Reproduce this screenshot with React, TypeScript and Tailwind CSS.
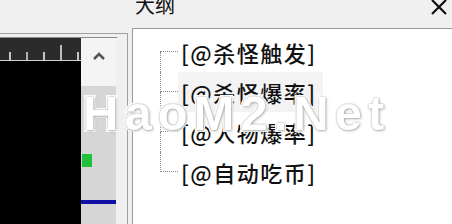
import React from 'react';

const items = ['[@杀怪触发]', '[@杀怪爆率]', '[@人物爆率]', '[@自动吃币]'];

const TreeRow: React.FC<{ label: string; first: boolean; last: boolean; selected: boolean }> = ({
  label,
  first,
  last,
  selected,
}) => (
  <div className="flex h-[40px] items-stretch">
    {/* connector: top half and bottom half of the dotted tree line */}
    <div className="flex w-[18px] flex-col">
      <div
        className={`h-[20px] border-b border-dotted border-[#8a8a8a] ${
          first ? '' : 'border-l'
        }`}
      />
      <div className={`h-[20px] border-dotted border-[#8a8a8a] ${last ? '' : 'border-l'}`} />
    </div>
    <div
      className={`flex items-center pl-[3px] pr-[6px] ${selected ? 'bg-[#f3f3f3]' : ''}`}
    >
      <span className="text-[22px] leading-[40px] font-medium tracking-[1.5px] text-[#111]">
        {label}
      </span>
    </div>
  </div>
);

export default function App() {
  return (
    <div
      className="relative flex h-[224px] w-[452px] overflow-hidden bg-[#f0f0f0]"
      style={{ fontFamily: '"Noto Sans CJK SC", "Noto Sans", sans-serif' }}
    >
      {/* left preview panel */}
      <div className="w-[128px] pt-[33px]">
        <div className="flex h-full flex-col border-t border-r border-[#a0a0a0] pt-[3px] pr-[10px]">
          <div className="flex flex-1 border-t border-[#8a8a8a]">
            {/* black canvas with ruler */}
            <div className="flex w-[81px] flex-col bg-black">
              <div className="flex h-[23px] items-end gap-[15px] border-b border-[#cfcfcf] bg-[#2b2b2b] pl-[9px]">
                <div className="h-[8px] w-[2px] bg-[#c8c8c8]" />
                <div className="h-[8px] w-[2px] bg-[#b0b0b0]" />
                <div className="h-[8px] w-[2px] bg-[#c8c8c8]" />
                <div className="h-[15px] w-[2px] bg-[#bdbdbd]" />
                <div className="h-[8px] w-[2px] bg-[#c8c8c8]" />
              </div>
            </div>
            {/* scrollbar */}
            <div className="flex w-[35px] flex-col bg-[#d6d6d6]">
              <div className="flex h-[48px] items-start justify-center bg-[#f4f4f4] pt-[13px]">
                <svg width="14" height="10" viewBox="0 0 14 10">
                  <path d="M2 8 L7 3 L12 8" fill="none" stroke="#555" strokeWidth="2.6" />
                </svg>
              </div>
              <div className="mt-[68px] ml-[1px] h-[13px] w-[10px] bg-[#1fc23a]" />
              <div className="mt-[33px] h-[4px] w-full bg-[#1010a8]" />
            </div>
          </div>
        </div>
      </div>

      {/* right outline panel */}
      <div className="ml-[4px] flex flex-1 flex-col">
        <div className="flex h-[28px] justify-between">
          <span className="-mt-[5px] pl-[3px] text-[20px] leading-[20px] text-[#111]">大纲</span>
          <svg className="mr-[4px] -mt-[1px]" width="18" height="16" viewBox="0 0 18 16">
            <path d="M2 1 L16 15 M16 1 L2 15" stroke="#111" strokeWidth="2.2" />
          </svg>
        </div>
        <div className="flex-1 border-t border-l border-[#9a9a9a] bg-white pt-[3px] pl-[27px]">
          {items.map((label, i) => (
            <TreeRow
              key={label}
              label={label}
              first={i === 0}
              last={i === items.length - 1}
              selected={i === 1}
            />
          ))}
        </div>
      </div>

      {/* watermark */}
      <div
        className="pointer-events-none absolute top-[89px] left-[83px] text-[49px] font-bold leading-none tracking-[6px] text-white"
        style={{
          fontFamily: '"Liberation Sans", Arial, sans-serif',
          WebkitTextStroke: '4px #ffffff',
          paintOrder: 'stroke fill',
          textShadow: '0 0 2px rgba(0,0,0,0.35), 1px 1px 3px rgba(0,0,0,0.25)',
        }}
      >
        HaoM2.Net
      </div>
    </div>
  );
}
